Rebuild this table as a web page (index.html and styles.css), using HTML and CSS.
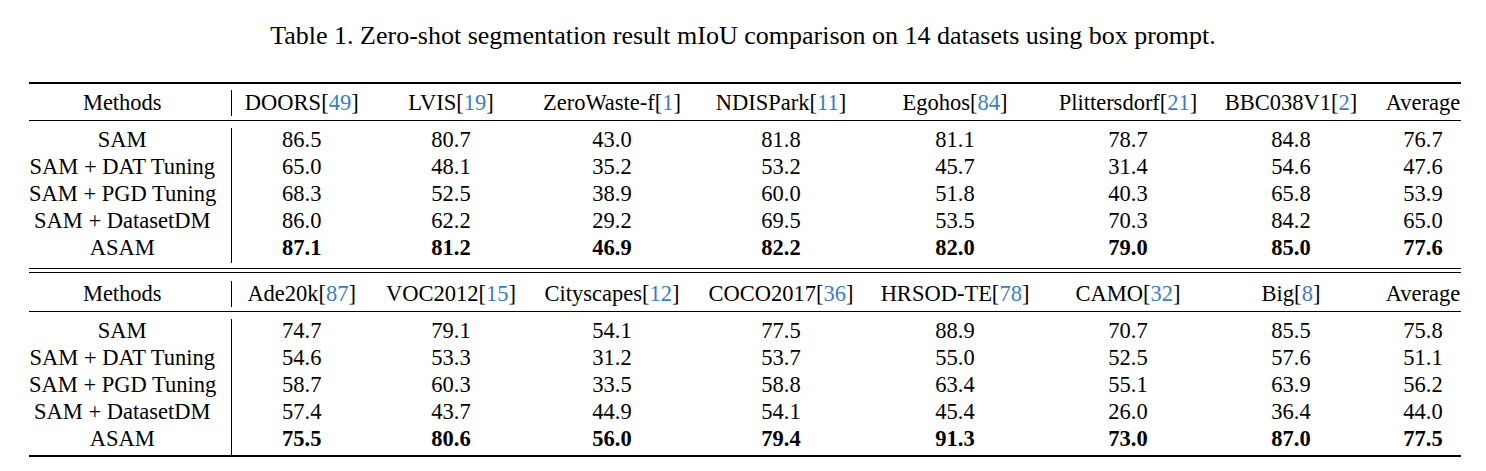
FILE: index.html
```html
<!DOCTYPE html>
<html>
<head>
<meta charset="utf-8">
<link rel="stylesheet" href="styles.css">
</head>
<body>
<p class="caption">Table 1. Zero-shot segmentation result mIoU comparison on 14 datasets using box prompt.</p>
<table class="results">
  <colgroup>
    <col class="w-m"><col class="w-2"><col class="w-3"><col class="w-4"><col class="w-5"><col class="w-6"><col class="w-7"><col class="w-8"><col class="w-9">
  </colgroup>
  <tbody>
    <tr class="gap toprule"><td colspan="9"></td></tr>
    <tr class="head">
      <td class="m">Methods</td>
      <td>DOORS[<span class="cite">49</span>]</td>
      <td>LVIS[<span class="cite">19</span>]</td>
      <td>ZeroWaste-f[<span class="cite">1</span>]</td>
      <td>NDISPark[<span class="cite">11</span>]</td>
      <td>Egohos[<span class="cite">84</span>]</td>
      <td>Plittersdorf[<span class="cite">21</span>]</td>
      <td>BBC038V1[<span class="cite">2</span>]</td>
      <td class="avg">Average</td>
    </tr>
    <tr class="gap g4"><td colspan="9"></td></tr>
    <tr class="gap g7 midrule"><td colspan="9"></td></tr>
    <tr><td class="m">SAM</td><td>86.5</td><td>80.7</td><td>43.0</td><td>81.8</td><td>81.1</td><td>78.7</td><td>84.8</td><td class="avg">76.7</td></tr>
    <tr><td class="m">SAM + DAT Tuning</td><td>65.0</td><td>48.1</td><td>35.2</td><td>53.2</td><td>45.7</td><td>31.4</td><td>54.6</td><td class="avg">47.6</td></tr>
    <tr><td class="m">SAM + PGD Tuning</td><td>68.3</td><td>52.5</td><td>38.9</td><td>60.0</td><td>51.8</td><td>40.3</td><td>65.8</td><td class="avg">53.9</td></tr>
    <tr><td class="m">SAM + DatasetDM</td><td>86.0</td><td>62.2</td><td>29.2</td><td>69.5</td><td>53.5</td><td>70.3</td><td>84.2</td><td class="avg">65.0</td></tr>
    <tr class="best"><td class="m">ASAM</td><td>87.1</td><td>81.2</td><td>46.9</td><td>82.2</td><td>82.0</td><td>79.0</td><td>85.0</td><td class="avg">77.6</td></tr>
    <tr class="gap g5"><td colspan="9"></td></tr>
    <tr class="gap g3 midrule"><td colspan="9"></td></tr>
    <tr class="gap g8 midrule"><td colspan="9"></td></tr>
    <tr class="head">
      <td class="m">Methods</td>
      <td>Ade20k[<span class="cite">87</span>]</td>
      <td>VOC2012[<span class="cite">15</span>]</td>
      <td>Cityscapes[<span class="cite">12</span>]</td>
      <td>COCO2017[<span class="cite">36</span>]</td>
      <td>HRSOD-TE[<span class="cite">78</span>]</td>
      <td>CAMO[<span class="cite">32</span>]</td>
      <td>Big[<span class="cite">8</span>]</td>
      <td class="avg">Average</td>
    </tr>
    <tr class="gap g4"><td colspan="9"></td></tr>
    <tr class="gap g7 midrule"><td colspan="9"></td></tr>
    <tr><td class="m">SAM</td><td>74.7</td><td>79.1</td><td>54.1</td><td>77.5</td><td>88.9</td><td>70.7</td><td>85.5</td><td class="avg">75.8</td></tr>
    <tr><td class="m">SAM + DAT Tuning</td><td>54.6</td><td>53.3</td><td>31.2</td><td>53.7</td><td>55.0</td><td>52.5</td><td>57.6</td><td class="avg">51.1</td></tr>
    <tr><td class="m">SAM + PGD Tuning</td><td>58.7</td><td>60.3</td><td>33.5</td><td>58.8</td><td>63.4</td><td>55.1</td><td>63.9</td><td class="avg">56.2</td></tr>
    <tr><td class="m">SAM + DatasetDM</td><td>57.4</td><td>43.7</td><td>44.9</td><td>54.1</td><td>45.4</td><td>26.0</td><td>36.4</td><td class="avg">44.0</td></tr>
    <tr class="best last"><td class="m">ASAM</td><td>75.5</td><td>80.6</td><td>56.0</td><td>79.4</td><td>91.3</td><td>73.0</td><td>87.0</td><td class="avg">77.5</td></tr>
  </tbody>
</table>
</body>
</html>
```
FILE: styles.css
```css
html, body {
  margin: 0;
  padding: 0;
  background: #ffffff;
}
body {
  font-family: "Liberation Serif", "Times New Roman", serif;
  color: #000;
  padding: 21px 25px 0 29px;
}
.caption {
  margin: 0 -25px 0 -29px;
  font-size: 26px;
  line-height: 30px;
  text-align: center;
}
.results {
  margin-top: 31px;
  border-collapse: collapse;
  table-layout: fixed;
  width: 1432px;
  font-size: 22.5px;
}
.w-m { width: 202px; }
.w-2 { width: 141px; }
.w-3 { width: 158px; }
.w-4 { width: 164px; }
.w-5 { width: 174px; }
.w-6 { width: 174px; }
.w-7 { width: 172px; }
.w-8 { width: 154px; }
.w-9 { width: 93px; }
.results td {
  padding: 0;
  height: 27px;
  line-height: 24px;
  vertical-align: top;
  text-align: center;
  white-space: nowrap;
}
.results .head td {
  height: 26px;
  line-height: 26px;
  vertical-align: middle;
}
.results td.m {
  padding-right: 15px;
  border-right: 1px solid #000;
}
.results td.avg {
  padding-left: 17px;
}
.results .gap td {
  height: 6px;
  line-height: 0;
  font-size: 0;
}
.results .g3 td { height: 3px; }
.results .g4 td { height: 4px; }
.results .g5 td { height: 5px; }
.results .g7 td { height: 7px; }
.results .g8 td { height: 8px; }
.results .toprule td { border-top: 2px solid #000; }
.results .midrule td { border-top: 1px solid #000; }
.results .best td:not(.m) { font-weight: bold; }
.results .last td { border-bottom: 2px solid #000; height: 28px; }
.cite { color: #3b7dc2; }
```
